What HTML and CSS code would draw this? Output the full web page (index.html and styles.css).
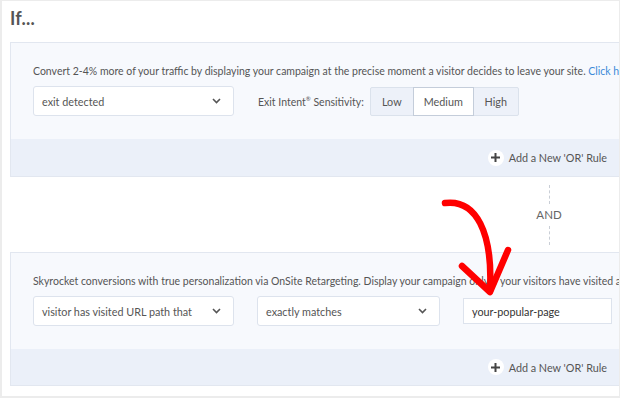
FILE: index.html
```html
<!DOCTYPE html>
<html>
<head>
<meta charset="utf-8">
<link rel="stylesheet" href="styles.css">
</head>
<body>
<div class="card">
  <h2 class="title">If...</h2>
  <div class="rule">
    <div class="rule-body">
      <p class="desc">Convert 2-4% more of your traffic by displaying your campaign at the precise moment a visitor decides to leave your site. <a class="link">Click here</a></p>
      <div class="row">
        <div class="select s1"><span>exit detected</span><svg class="chev" width="9" height="6" viewBox="0 0 9 6"><path d="M1 1l3.5 3.5L8 1" fill="none" stroke="#555" stroke-width="1.6"/></svg></div>
        <span class="label">Exit Intent<sup>®</sup> Sensitivity:</span>
        <div class="btn-group">
          <span class="btn b-low">Low</span>
          <span class="btn b-med">Medium</span>
          <span class="btn b-high">High</span>
        </div>
      </div>
    </div>
    <div class="rule-foot">
      <span class="plus"><svg width="9" height="9" viewBox="0 0 9 9"><path d="M4.5 0v9M0 4.5h9" stroke="#444" stroke-width="2"/></svg></span>
      <span class="add">Add a New 'OR' Rule</span>
    </div>
  </div>
  <div class="and-wrap">
    <div class="and">
      <span class="dash"></span>
      <span class="and-text">AND</span>
      <span class="dash"></span>
    </div>
  </div>
  <div class="rule">
    <div class="rule-body">
      <p class="desc">Skyrocket conversions with true personalization via OnSite Retargeting. Display your campaign only if your visitors have visited a</p>
      <div class="row">
        <div class="select s1"><span>visitor has visited URL path that</span><svg class="chev" width="9" height="6" viewBox="0 0 9 6"><path d="M1 1l3.5 3.5L8 1" fill="none" stroke="#555" stroke-width="1.6"/></svg></div>
        <div class="select s2"><span>exactly matches</span><svg class="chev" width="9" height="6" viewBox="0 0 9 6"><path d="M1 1l3.5 3.5L8 1" fill="none" stroke="#555" stroke-width="1.6"/></svg></div>
        <div class="input">your-popular-page</div>
      </div>
    </div>
    <div class="rule-foot f2">
      <span class="plus"><svg width="9" height="9" viewBox="0 0 9 9"><path d="M4.5 0v9M0 4.5h9" stroke="#444" stroke-width="2"/></svg></span>
      <span class="add">Add a New 'OR' Rule</span>
    </div>
  </div>
  <svg class="arrow" width="620" height="398" viewBox="0 0 620 398">
    <path d="M445 203 C 476 199, 493 232, 490 291" fill="none" stroke="#f00" stroke-width="6.5" stroke-linecap="round"/>
    <path d="M462 266 L490 292 L508 250" fill="none" stroke="#f00" stroke-width="6.5" stroke-linecap="round" stroke-linejoin="round"/>
  </svg>
</div>
</body>
</html>
```

FILE: styles.css
```css
* { box-sizing: border-box; }
html, body { margin: 0; padding: 0; }
body {
  width: 620px;
  height: 398px;
  background: #ececec;
  font-family: Lato, "Open Sans", sans-serif;
  color: #555;
  overflow: hidden;
}
.card {
  position: relative;
  margin: 1px 1px 0 2px;
  height: 395px;
  background: #fff;
  overflow: hidden;
}
.title {
  margin: 0;
  padding: 6px 0 0 8px;
  height: 41px;
  font-size: 18px;
  font-weight: 700;
  color: #555;
  letter-spacing: 0.2px;
}
.rule {
  margin-left: 8px;
  width: 640px;
  border: 1px solid #e2e7f0;
  border-right: none;
}
.rule-body {
  background: #f7f9fd;
  padding: 19px 0 23px 22px;
}
.desc {
  margin: 0;
  height: 20px;
  font-size: 10.5px;
  line-height: 18px;
  white-space: nowrap;
  color: #555;
}
.link { color: #3c8ad8; }
.row {
  display: flex;
  align-items: center;
  margin-top: 4px;
}
.select {
  height: 30px;
  background: #fff;
  border: 1px solid #dde3ed;
  border-radius: 3px;
  display: flex;
  align-items: center;
  justify-content: space-between;
  padding: 0 12px 0 8px;
  font-size: 10.8px;
  color: #555;
}
.s1 { width: 201px; }
.s2 { width: 183px; margin-left: 23px; }
.chev { display: block; }
.label {
  margin-left: 24px;
  font-size: 10.5px;
  color: #555;
}
.label sup { font-size: 6px; }
.btn-group {
  margin-left: 6px;
  display: flex;
  height: 29px;
  border: 1px solid #dbe2ec;
  border-radius: 2px;
  background: #edf1f9;
}
.btn {
  display: flex;
  align-items: center;
  justify-content: center;
  font-size: 10.8px;
  color: #555;
}
.b-low { width: 42px; }
.b-med { width: 61px; background: #fff; border: 1px solid #c4cdda; margin: -1px 0; }
.b-high { width: 44px; }
.input {
  margin-left: 23px;
  width: 149px;
  height: 26px;
  background: #fff;
  border: 1px solid #dde3ed;
  display: flex;
  align-items: center;
  padding-left: 8px;
  font-size: 10.8px;
  color: #333;
}
.rule-foot {
  background: #ebf0f9;
  height: 37px;
  width: 609px;
  display: flex;
  align-items: center;
  justify-content: flex-end;
  padding-right: 13px;
}
.f2 { height: 36px; }
.plus {
  width: 16px;
  height: 16px;
  border-radius: 50%;
  background: #fff;
  display: flex;
  align-items: center;
  justify-content: center;
  margin-right: 5px;
}
.plus svg { display: block; }
.add {
  font-size: 10.8px;
  color: #555;
}
.and-wrap {
  height: 75px;
  display: flex;
  justify-content: flex-end;
  padding: 8px 55px 0 0;
}
.and {
  display: flex;
  flex-direction: column;
  align-items: center;
  width: 30px;
}
.dash {
  width: 0;
  height: 19px;
  border-left: 1px dashed #c9ced6;
}
.and-text {
  font-size: 11.5px;
  line-height: 22px;
  color: #666;
}
.arrow {
  position: absolute;
  left: -2px;
  top: -1px;
  pointer-events: none;
}
```
